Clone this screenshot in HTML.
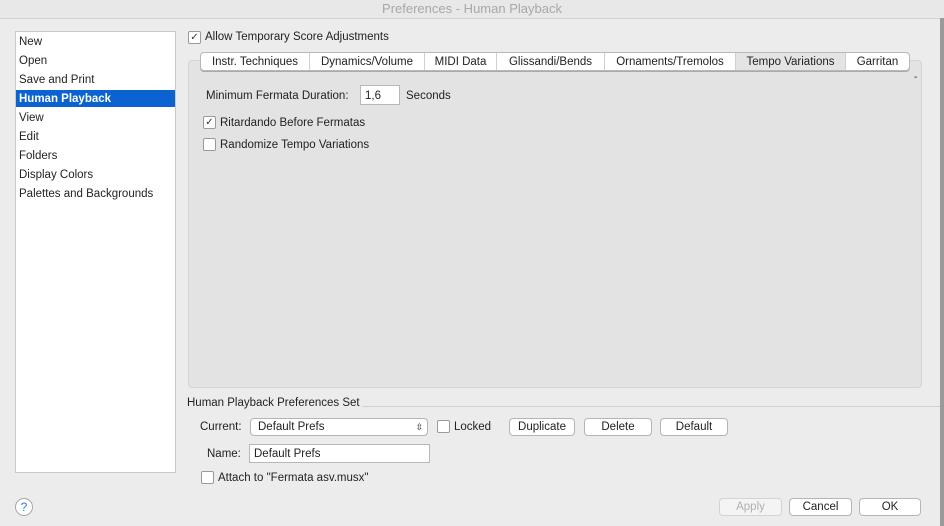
<!DOCTYPE html>
<html><head><style>
body{margin:0;width:944px;height:526px;background:#ececec;font-family:"Liberation Sans",sans-serif;font-size:11.5px;color:#222;position:relative;overflow:hidden}
.a{position:absolute}
.title{left:0;top:0;width:944px;height:18px;background:#e8e8e8;border-bottom:1px solid #d2d2d2;text-align:center;line-height:18px;font-size:13px;color:#a8a8a8}
.list{left:15px;top:31px;width:159px;height:440px;background:#fff;border:1px solid #c8c8c8}
.list div{height:19px;line-height:20px;padding-left:3px;font-size:11.5px}
.list .sel{background:#0a63d0;color:#fff;font-weight:bold;height:17px;line-height:18px;margin:1px 0}
.cb{width:11px;height:11px;border:1px solid #9a9a9a;border-radius:2px;background:#fff;font-size:10px;line-height:11px;text-align:center;color:#333}
.panel{left:188px;top:60px;width:732px;height:326px;background:#e3e3e3;border:1px solid #d4d4d4;border-radius:4px}
.tabs{left:200px;top:52px;height:17px;display:flex;border:1px solid #b8b8b8;border-radius:4px;background:#fff;overflow:hidden;box-shadow:0 1px 0 #aaa}
.tabs div{height:17px;line-height:19px;text-align:center;border-right:1px solid #d0d0d0;font-size:11.5px}
.tabs .s{background:#e4e4e4}
.btn{height:16px;line-height:17px;background:#fff;border:1px solid #b5b5b5;border-radius:4px;text-align:center;font-size:11.5px}
.inp{background:#fff;border:1px solid #b8b8b8;height:17px;line-height:18px;padding-left:4px}
</style></head><body>
<div class="a title">Preferences - Human Playback</div>
<div class="a list">
<div>New</div><div>Open</div><div>Save and Print</div><div class="sel">Human Playback</div><div>View</div><div>Edit</div><div>Folders</div><div>Display Colors</div><div>Palettes and Backgrounds</div>
</div>
<div class="a cb" style="left:188px;top:31px">✓</div>
<div class="a" style="left:205px;top:31px">Allow Temporary Score Adjustments</div>
<div class="a panel"></div>
<div class="a tabs">
<div style="width:108px">Instr. Techniques</div><div style="width:114px">Dynamics/Volume</div><div style="width:71px">MIDI Data</div><div style="width:107px">Glissandi/Bends</div><div style="width:130px">Ornaments/Tremolos</div><div class="s" style="width:109px">Tempo Variations</div><div style="width:63px;border-right:0">Garritan</div>
</div>
<div class="a" style="left:914px;top:72px;font-size:10px">-</div>
<div class="a" style="left:206px;top:90px">Minimum Fermata Duration:</div>
<div class="a inp" style="left:360px;top:85px;width:34px;height:18px;line-height:20px">1,6</div>
<div class="a" style="left:406px;top:90px">Seconds</div>
<div class="a cb" style="left:203px;top:116px">✓</div>
<div class="a" style="left:220px;top:117px">Ritardando Before Fermatas</div>
<div class="a cb" style="left:203px;top:138px"></div>
<div class="a" style="left:220px;top:139px">Randomize Tempo Variations</div>
<div class="a" style="left:187px;top:397px">Human Playback Preferences Set</div>
<div class="a" style="left:362px;top:406px;width:578px;height:1px;background:#d0d0d0"></div>
<div class="a" style="left:200px;top:421px">Current:</div>
<div class="a btn" style="left:250px;top:418px;width:176px;text-align:left;padding-left:0"><span style="padding-left:7px">Default Prefs</span><span style="position:absolute;right:4px;top:0;font-size:9px">⇳</span></div>
<div class="a cb" style="left:437px;top:420px"></div>
<div class="a" style="left:454px;top:421px">Locked</div>
<div class="a btn" style="left:509px;top:418px;width:64px">Duplicate</div>
<div class="a btn" style="left:584px;top:418px;width:66px">Delete</div>
<div class="a btn" style="left:660px;top:418px;width:66px">Default</div>
<div class="a" style="left:207px;top:448px">Name:</div>
<div class="a inp" style="left:249px;top:444px;width:175px">Default Prefs</div>
<div class="a cb" style="left:201px;top:471px"></div>
<div class="a" style="left:218px;top:472px">Attach to "Fermata asv.musx"</div>
<div class="a" style="left:15px;top:498px;width:16px;height:16px;border:1px solid #a8a8a8;border-radius:50%;background:#fff;text-align:center;line-height:16px;color:#3a7bd5;font-size:12px">?</div>
<div class="a btn" style="left:719px;top:498px;width:61px;color:#b0b0b0;border-color:#d4d4d4;background:#f4f4f4">Apply</div>
<div class="a btn" style="left:789px;top:498px;width:61px">Cancel</div>
<div class="a btn" style="left:859px;top:498px;width:60px">OK</div>
<div class="a" style="left:940px;top:18px;width:4px;height:508px;background:#9a9a9a"></div>
</body></html>
